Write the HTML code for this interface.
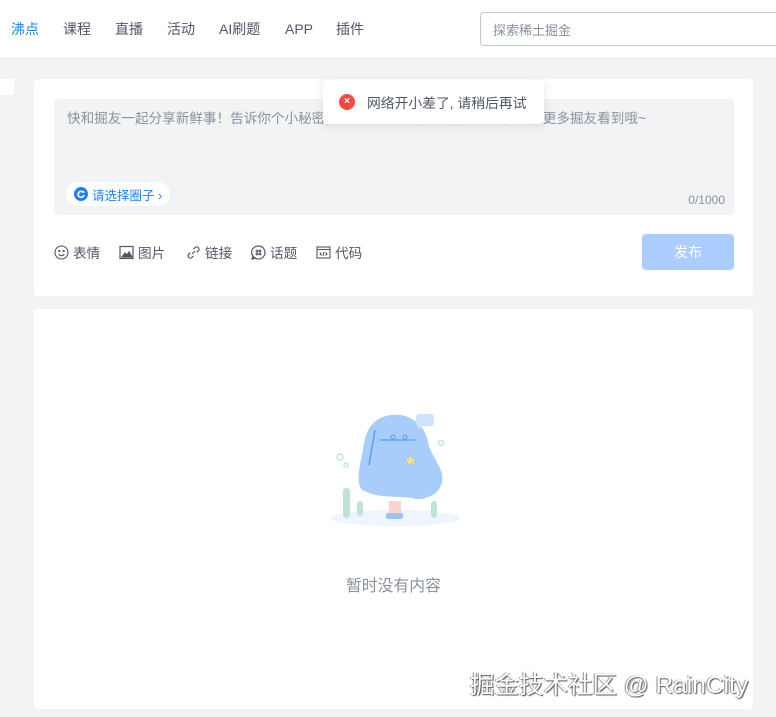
<!DOCTYPE html>
<html><head><meta charset="utf-8"><style>
*{margin:0;padding:0;box-sizing:border-box}
body{width:776px;height:717px;overflow:hidden;background:#f2f3f5;font-family:"Liberation Sans","Noto Sans CJK SC",sans-serif;position:relative;color:#515767}
.hdr{position:absolute;left:0;top:0;width:776px;height:59px;background:#fff;border-bottom:1px solid #e4e6eb}
.nav{position:absolute;top:19px;font-size:14px;line-height:20px;color:#515767}
.search{position:absolute;left:480px;top:12px;width:310px;height:34px;border:1px solid #c2c8d1;border-radius:4px;font-size:13px;color:#8a919f;padding:7px 12px}
.card{position:absolute;background:#fff;border-radius:4px}
.ta{position:absolute;left:54px;top:99px;width:680px;height:116px;background:#f2f3f5;border-radius:4px}
.ph{position:absolute;left:13px;top:8px;font-size:13.6px;color:#8a919f;white-space:nowrap}
.cnt{position:absolute;right:9px;bottom:8px;font-size:12px;color:#8a919f}
.circ{position:absolute;left:12px;top:83px;height:24px;padding:0 8px 0 8px;border-radius:12px;background:#fff;font-size:12.5px;color:#1e80ff;display:flex;align-items:center;gap:4px}
.tool{position:absolute;top:242px;font-size:13.6px;color:#515767;display:flex;align-items:center;gap:4px}
.btn{position:absolute;left:642px;top:234px;width:92px;height:36px;background:#abcdff;border-radius:4px;color:#fff;font-size:14px;text-align:center;line-height:36px}
.toast{position:absolute;left:323px;top:80px;width:221px;height:44px;background:#fff;border-radius:4px;box-shadow:0 2px 10px rgba(0,0,0,.1);display:flex;align-items:center;font-size:13.8px;color:#515767;padding-left:16px;gap:12px;white-space:nowrap}
.x{width:16px;height:16px;border-radius:50%;background:#f54a45;color:#fff;font-size:10px;font-weight:bold;text-align:center;line-height:16px}
.wm{position:absolute;left:470px;top:666px;font-size:24.5px;color:#fff;text-shadow:1px 1px 1px #555,-1px 0 1px #888;white-space:nowrap}
</style></head><body>
<div class="hdr">
<span class="nav" style="left:11px;color:#1e80ff">沸点</span>
<span class="nav" style="left:63px">课程</span>
<span class="nav" style="left:115px">直播</span>
<span class="nav" style="left:167px">活动</span>
<span class="nav" style="left:219px">AI刷题</span>
<span class="nav" style="left:285px">APP</span>
<span class="nav" style="left:336px">插件</span>
<div class="search">探索稀土掘金</div>
</div>
<div class="card" style="left:0;top:79px;width:14px;height:16px;border-radius:0 2px 2px 0"></div>
<div class="card" style="left:34px;top:79px;width:719px;height:217px"></div>
<div class="ta"><div class="ph">快和掘友一起分享新鲜事！告诉你个小秘密，发布时添加话题和插入圈子，会被更多掘友看到哦~</div>
<div class="circ"><svg width="14" height="14" viewBox="0 0 14 14"><circle cx="7" cy="7" r="7" fill="#1e80ff"/><path d="M9.5 5.5A3 3 0 1 0 10 8" stroke="#fff" stroke-width="1.6" fill="none"/><circle cx="9.6" cy="5" r="1" fill="#fff"/></svg>请选择圈子 ›</div>
<div class="cnt">0/1000</div></div>
<div class="tool" style="left:54px"><svg width="15" height="15" viewBox="0 0 15 15" fill="none" stroke="#515767" stroke-width="1.1"><circle cx="7.5" cy="7.5" r="6.5"/><circle cx="5.3" cy="6" r=".6" fill="#515767"/><circle cx="9.7" cy="6" r=".6" fill="#515767"/><path d="M4.8 9a3 3 0 0 0 5.4 0"/></svg>表情</div>
<div class="tool" style="left:119px"><svg width="15" height="15" viewBox="0 0 15 15" fill="none" stroke="#515767" stroke-width="1.2"><rect x="1" y="1.5" width="13" height="12"/><path d="M3 12l3-4 2 2 2-3 3 5z" fill="#515767"/></svg> 图片</div>
<div class="tool" style="left:186px"><svg width="15" height="15" viewBox="0 0 15 15" fill="none" stroke="#515767" stroke-width="1.2"><path d="M6 9l3-3M7.5 4l1.5-1.5a2.3 2.3 0 0 1 3.3 3.3L10.8 7.3M7.5 11l-1.5 1.5a2.3 2.3 0 0 1-3.3-3.3L4.2 7.7"/></svg> 链接</div>
<div class="tool" style="left:251px"><svg width="15" height="15" viewBox="0 0 15 15" fill="none" stroke="#515767" stroke-width="1.2"><path d="M7.5 1a6.5 6.5 0 1 1-5.5 10L1 14l3-.8A6.5 6.5 0 0 1 7.5 1z"/><path d="M6 4.5v6M9 4.5v6M4.5 6h6M4.5 9h6"/></svg> 话题</div>
<div class="tool" style="left:316px"><svg width="15" height="15" viewBox="0 0 15 15" fill="none" stroke="#515767" stroke-width="1.1"><rect x="1" y="2" width="13" height="11"/><path d="M1 4.5h13M5.5 7.5l-1.5 1.5 1.5 1.5M9.5 7.5l1.5 1.5-1.5 1.5M8 7l-1 4"/></svg> 代码</div>
<div class="btn">发布</div>
<div class="card" style="left:34px;top:309px;width:719px;height:400px"></div>
<svg style="position:absolute;left:325px;top:405px" width="140" height="125" viewBox="0 0 140 125">
<ellipse cx="70" cy="113" rx="65" ry="8" fill="#eef5fd"/>
<path d="M58 12c20-8 42 5 45 25 2 12 12 22 14 32 4 22-22 28-30 24-12-2-35 0-45-6C28 85 35 60 38 45 40 28 45 17 58 12z" fill="#a9cdfb"/>
<path d="M50 25l-6 35" stroke="#5c9cef" stroke-width="1.5"/>
<path d="M55 35h35" stroke="#5c9cef" stroke-width="1.3"/>
<circle cx="68" cy="32" r="2" fill="none" stroke="#5c9cef"/><circle cx="80" cy="32" r="2" fill="none" stroke="#5c9cef"/>
<path d="M85 51l2 3 3 0-2 2 1 3-3-1-3 2 0-3-2-2 3-1z" fill="#f9e46d"/>
<rect x="91" y="9" width="18" height="12" rx="3" fill="#cde3fb"/>
<path d="M93 21l0 4 4-4" fill="#cde3fb"/>
<rect x="64" y="96" width="12" height="13" fill="#f8d4cc"/>
<rect x="61" y="108" width="17" height="6" rx="2" fill="#9cc4f7"/>
<circle cx="15" cy="52" r="3" fill="none" stroke="#bfe9d9" stroke-width="1.5"/><circle cx="21" cy="60" r="2" fill="none" stroke="#bfe9d9" stroke-width="1.5"/><circle cx="116" cy="38" r="2.5" fill="none" stroke="#bfe9d9" stroke-width="1.5"/>
<rect x="18" y="83" width="7" height="30" rx="3" fill="#bfe3d5"/><rect x="32" y="96" width="6" height="15" rx="3" fill="#bfe3d5"/><rect x="106" y="96" width="6" height="17" rx="3" fill="#bfe3d5"/>
</svg>
<div style="position:absolute;left:346px;top:573px;font-size:15.8px;color:#8a919f;white-space:nowrap">暂时没有内容</div>
<div class="toast"><div class="x">×</div>网络开小差了, 请稍后再试</div>
<div class="wm">掘金技术社区 @ RainCity</div>
</body></html>
